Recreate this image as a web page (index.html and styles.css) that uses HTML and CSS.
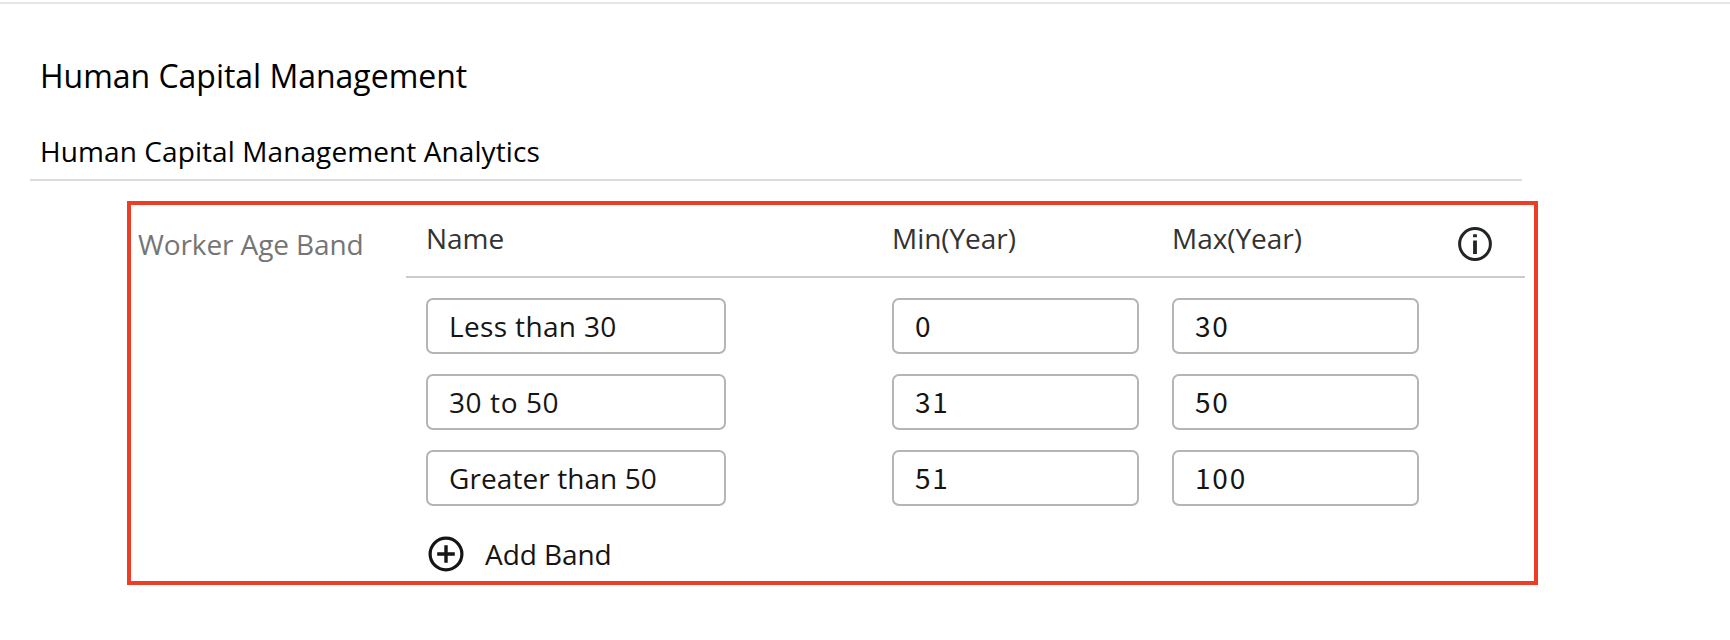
FILE: index.html
```html
<!DOCTYPE html>
<html lang="en">
<head>
<meta charset="utf-8">
<title>Human Capital Management</title>
<link rel="stylesheet" href="styles.css">
</head>
<body>
<main class="page">
  <h1 class="page-title">Human Capital Management</h1>
  <h2 class="section-title">Human Capital Management Analytics</h2>
  <section class="band-panel">
    <div class="panel-label">Worker Age Band</div>
    <div class="band-table">
      <div class="band-row band-head">
        <span>Name</span>
        <span>Min(Year)</span>
        <span>Max(Year)</span>
        <svg class="info-icon" width="34" height="34" viewBox="0 0 34 34">
          <circle cx="17" cy="17" r="15.4" fill="none" stroke="#222526" stroke-width="3"/>
          <path d="M15.1 7.2h3.8v3h-3.8zM15.1 13.5h3.8v13.5h-3.8z" fill="#222526"/>
        </svg>
      </div>
      <div class="band-body">
        <div class="band-row">
          <input class="field field-name spaced" value="Less than 30" aria-label="Name">
          <input class="field number" value="0" aria-label="Min">
          <input class="field number" value="30" aria-label="Max">
        </div>
        <div class="band-row">
          <input class="field field-name spaced-wide" value="30 to 50" aria-label="Name">
          <input class="field number" value="31" aria-label="Min">
          <input class="field number" value="50" aria-label="Max">
        </div>
        <div class="band-row">
          <input class="field field-name" value="Greater than 50" aria-label="Name">
          <input class="field number" value="51" aria-label="Min">
          <input class="field number" value="100" aria-label="Max">
        </div>
      </div>
      <div class="add-band">
        <svg width="36" height="36" viewBox="0 0 36 36" fill="none" stroke="#161513">
          <circle cx="18" cy="18" r="15.9" stroke-width="3.2"/>
          <path d="M18 9.2v17.6M9.2 18h17.6" stroke-width="3.4"/>
        </svg>
        <span>Add Band</span>
      </div>
    </div>
  </section>
</main>
</body>
</html>
```

FILE: styles.css
```css
* {
  box-sizing: border-box;
}

body {
  margin: 0;
  padding-top: 2px;
  background: #fff;
  color: #161513;
  font-family: "Open Sans", "Noto Sans", sans-serif;
  font-size: 28px;
  line-height: 40px;
}

.page {
  height: 638px;
  padding: 54px 0 0 30px;
  border-top: 2px solid #e6e6e6;
}

.page-title,
.section-title {
  margin: 0;
  color: #000;
  font-weight: 400;
}

.page-title {
  padding-left: 10px;
  font-size: 32px;
  line-height: 36px;
  letter-spacing: -0.02px;
}

.section-title {
  width: 1492px;
  height: 52px;
  margin-top: 35px;
  padding: 0 0 0 10px;
  border-bottom: 2px solid #dcdcdc;
  font-size: 28px;
  line-height: 44px;
  letter-spacing: 0.09px;
}

.band-panel {
  display: flex;
  width: 1411px;
  height: 384px;
  margin: 20px 0 0 97px;
  border: 4px solid #ec3e26;
}

.panel-label {
  width: 275px;
  padding: 19px 0 0 7px;
  color: #757575;
  letter-spacing: -0.1px;
}

.band-table {
  width: 1119px;
}

.band-row {
  display: grid;
  grid-template-columns: 466px 280px 287px auto;
}

.band-head {
  grid-template-columns: 466px 280px 286px auto;
  height: 73px;
  padding: 13px 0 0 20px;
  border-bottom: 2px solid #ccc;
  color: #333;
  letter-spacing: -0.05px;
}

.info-icon {
  margin-top: 9px;
}

.band-body {
  display: grid;
  gap: 20px;
  padding: 20px 0 0 20px;
}

.field {
  width: 247px;
  height: 56px;
  padding: 0 21px;
  border: 2px solid #b5b5b5;
  border-radius: 7px;
  background: #fff;
  color: #161513;
  font: inherit;
  letter-spacing: 0.08px;
}

.field-name {
  width: 300px;
}

.spaced {
  letter-spacing: 0.35px;
}

.spaced-wide {
  letter-spacing: 0.6px;
}

.number {
  padding-bottom: 2px;
  font-family: "Noto Sans CJK SC", "Open Sans", sans-serif;
  letter-spacing: 1.8px;
}

.add-band {
  display: flex;
  align-items: center;
  gap: 21px;
  height: 40px;
  margin: 28px 0 0 22px;
  letter-spacing: -0.08px;
}
```
